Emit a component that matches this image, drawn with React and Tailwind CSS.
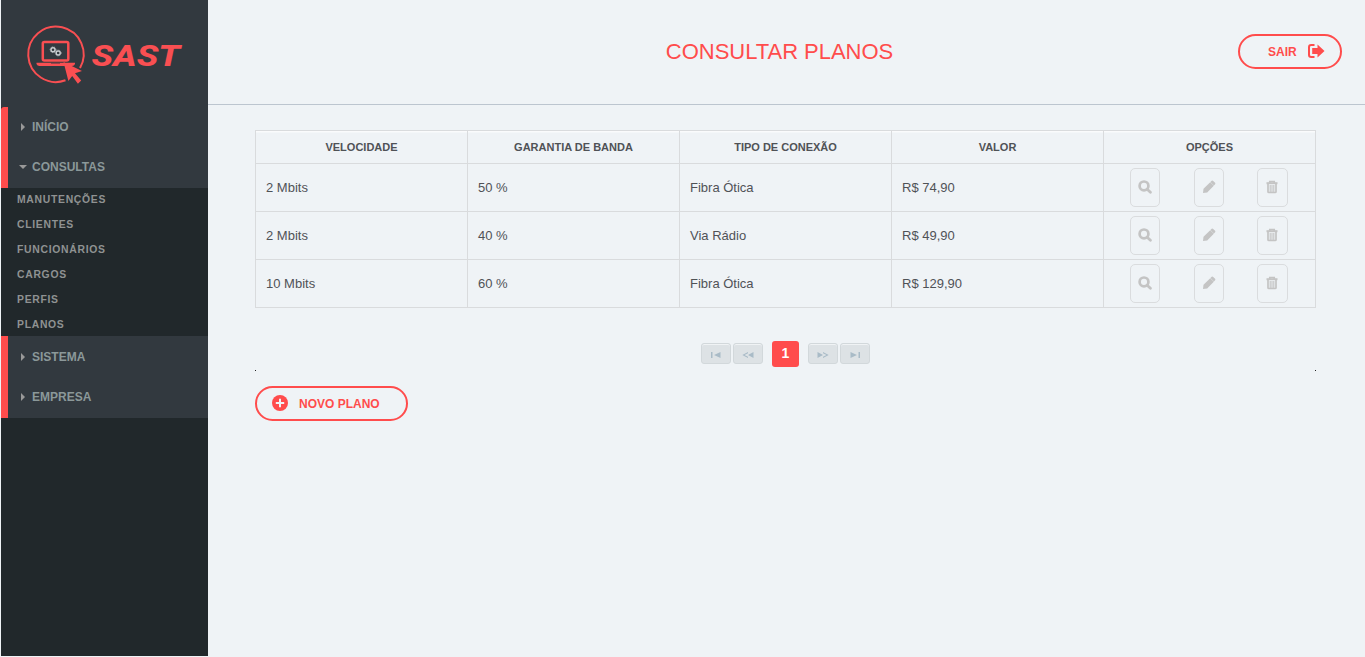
import React from "react";

const columns = ["VELOCIDADE", "GARANTIA DE BANDA", "TIPO DE CONEXÃO", "VALOR", "OPÇÕES"];
const plans = [
  ["2 Mbits", "50 %", "Fibra Ótica", "R$ 74,90"],
  ["2 Mbits", "40 %", "Via Rádio", "R$ 49,90"],
  ["10 Mbits", "60 %", "Fibra Ótica", "R$ 129,90"],
];
const queries = ["MANUTENÇÕES", "CLIENTES", "FUNCIONÁRIOS", "CARGOS", "PERFIS", "PLANOS"];

function Logo() {
  return (
    <svg width="207" height="107" viewBox="1 0 207 107" className="block">
      <g fill="none" stroke="#f94f52">
        <path d="M80 68A27.700 27.700 0 1 0 65.500 80.300" strokeWidth="2" />
        <rect x="42.800" y="42.100" width="25.500" height="18.500" rx="1.500" strokeWidth="2.500" />
      </g>
      <path d="M36.500 62.800h38.500v1.200q-.8 2-3 2H39.500q-2.200 0-3-2z" fill="#f94f52" />
      <path d="M51 62.800h9v1h-9z" fill="#32393f" opacity=".6" />
      <path d="M63.500 62l18.500 9-7 2.300 6.200 7.200-3.300 3.200-5.700-7.700-3.800 5z" fill="#f94f52" />
      <g fill="none" stroke="#c9ced1">
        <circle cx="53" cy="49.700" r="2" strokeWidth="1.400" />
        <circle cx="53" cy="49.700" r="2.900" strokeWidth=".8" strokeDasharray="1 1.100" />
        <circle cx="58.200" cy="53" r="2" strokeWidth="1.400" />
        <circle cx="58.200" cy="53" r="2.900" strokeWidth=".8" strokeDasharray="1 1.100" />
      </g>
      <text
        x="91.500"
        y="66"
        textLength="88.500"
        lengthAdjust="spacingAndGlyphs"
        fill="#f94f52"
        className="font-['Roboto','Liberation_Sans',sans-serif] text-[29px] font-extrabold italic"
      >
        SAST
      </text>
    </svg>
  );
}

function SearchIcon() {
  return (
    <svg width="14" height="14" viewBox="0 0 14 14">
      <circle cx="6" cy="5.900" r="4.400" fill="none" stroke="#c4c4c4" strokeWidth="2.700" />
      <path d="M9.200 9.200l3.200 3" stroke="#c4c4c4" strokeWidth="2.800" strokeLinecap="round" />
    </svg>
  );
}

function PencilIcon() {
  return (
    <svg width="14" height="14" viewBox="0 0 14 14" fill="#c4c4c4">
      <path d="M1 13l.5-4.300L8.200 2.200l3.600 3.600L5.200 12.500zM8.400 2l1.300-1.200q.8-.6 1.500.1l1.900 1.900q.6.700 0 1.400L11.900 5.500z" />
    </svg>
  );
}

function TrashIcon() {
  return (
    <svg width="12" height="14" viewBox="0 0 12 14" fill="none" stroke="#c4c4c4">
      <path d="M.5 3.200h11" strokeWidth="2" />
      <path d="M3.800 3V1.500h4.400V3" strokeWidth="1.700" />
      <path d="M2 4v7.700q0 .8.800.8h6.400q.8 0 .8-.8V4" strokeWidth="1.700" />
      <path d="M4.200 5v7M6 5v7M7.800 5v7" strokeWidth="1.100" />
    </svg>
  );
}

function MenuItem({ label, open, className = "" }) {
  return (
    <a className={`flex h-10 items-center text-[12px] font-bold text-[#8b9899] ${className}`}>
      <span className="flex w-[23px] shrink-0 justify-end pr-[5px]">
        {open ? (
          <svg width="8" height="4" viewBox="0 0 8 4"><path d="M0 0h8L4 4z" fill="#999" /></svg>
        ) : (
          <svg width="4" height="8" viewBox="0 0 4 8" className="mr-[2px]"><path d="M0 0l4 4-4 4z" fill="#999" /></svg>
        )}
      </span>
      {label}
    </a>
  );
}

function OptionButton({ children, className = "" }) {
  return (
    <button className={`flex h-[39px] items-center justify-center rounded-[5px] border border-[#dadcde] pb-px ${className}`}>
      {children}
    </button>
  );
}

function PageButton({ d, className = "" }) {
  return (
    <button className={`flex h-[21px] w-[30px] items-center justify-center rounded-[3px] border border-[#d2d8db] bg-[#dde2e5] shadow-[inset_0_1px_0_#f0f3f5] ${className}`}>
      <svg width="12" height="6" viewBox="0 0 12 6" className="mt-[2px]" fill="#a9bbc7"><path d={d} /></svg>
    </button>
  );
}

export default function App() {
  return (
    <div className="flex h-[657px] w-full overflow-hidden bg-[#eff3f6] pl-px font-['Liberation_Sans',Arial,sans-serif]">
      <aside className="h-[656px] w-[207px] shrink-0 bg-[#21282b]">
        <div className="h-[107px] bg-[#32393f]"><Logo /></div>
        <nav>
          <div className="h-[81px] rounded-tl-[3px] border-l-[7px] border-[#ff4c4c] bg-[#32393f]">
            <MenuItem label="INÍCIO" className="pl-px" />
            <MenuItem label="CONSULTAS" open className="pl-px" />
          </div>
          <div className="flex h-[148px] flex-col pl-4 text-[10.4px] font-bold tracking-[0.7px] text-[#8f9292]">
            {queries.map((item) => (
              <a key={item} className="flex h-[25px] shrink-0 items-center pb-px">{item}</a>
            ))}
          </div>
          <div className="h-[82px] border-l-[7px] border-[#ff4c4c] bg-[#32393f] pt-px">
            <MenuItem label="SISTEMA" className="pl-px" />
            <MenuItem label="EMPRESA" className="pl-px" />
          </div>
        </nav>
      </aside>

      <main className="min-w-0 flex-1">
        <header className="grid h-[105px] grid-cols-[1fr_auto_1fr] items-center border-b border-[#bcc5cf] pr-[23px]">
          <h1 className="col-start-2 ml-[9px] pb-px text-[22px] leading-[30px] tracking-[-0.03px] text-[#ff4c4c]">CONSULTAR PLANOS</h1>
          <button className="mb-0.5 flex h-[35px] w-[104px] items-center justify-self-end rounded-full border-2 border-[#ff4c4c] pl-7 text-[12px] font-bold text-[#ff4c4c]">
            <span className="w-7 pt-px">SAIR</span>
            <svg width="17" height="14" viewBox="0 0 17 14" className="ml-[12px]">
              <path d="M6.500 1H3.200Q1 1 1 3.200v7.600Q1 13 3.200 13h3.300" fill="none" stroke="#ff4c4c" strokeWidth="2" />
              <path d="M4.200 4H9.500V.5L16.500 7l-7 6.500V10H4.200z" fill="#ff4c4c" />
            </svg>
          </button>
        </header>

        <section className="ml-[47px] mt-[25px] w-[1061px]">
          <table className="w-full table-fixed border-collapse text-[13px] text-[#4f5256]">
            <thead>
              <tr className="h-[33px]">
                {columns.map((label) => (
                  <th key={label} className="border border-[#d9dbdd] p-0 text-[11px] font-bold shadow-[inset_0_1.5px_0_#fafbfc]">{label}</th>
                ))}
              </tr>
            </thead>
            <tbody>
              {plans.map((plan, row) => (
                <tr key={row} className="h-12">
                  {plan.map((value) => (
                    <td key={value} className="border border-[#d9dbdd] p-0 pl-[10px]">{value}</td>
                  ))}
                  <td className="border border-[#d9dbdd] p-0">
                    <div className="flex justify-center pr-[2px]">
                      <OptionButton className="w-[30px]"><SearchIcon /></OptionButton>
                      <OptionButton className="ml-[34px] w-[30px]"><PencilIcon /></OptionButton>
                      <OptionButton className="ml-[33px] w-[31px]"><TrashIcon /></OptionButton>
                    </div>
                  </td>
                </tr>
              ))}
            </tbody>
          </table>

          <div className="mt-[33px] flex h-[26px] items-start justify-center">
            <PageButton d="M1 0h1.500v6H1zM10.500 0v6L4 3z" className="mt-0.5" />
            <PageButton d="M6 0v1.200L2.500 3 6 4.800V6L.3 3zM11.500 0v6L6 3z" className="ml-0.5 mt-0.5" />
            <span className="mx-[9px] flex h-[26px] w-[27px] items-center justify-center rounded-[3px] bg-[#ff4c4c] pb-px text-[14px] font-bold text-white">1</span>
            <PageButton d="M.5 0v6L6 3zM6 0v1.200L9.500 3 6 4.800V6l5.700-3z" className="mt-0.5" />
            <PageButton d="M1.500 0v6L8 3zM9.500 0H11v6H9.500z" className="ml-0.5 mt-0.5" />
          </div>
          <div className="mt-[3px] flex h-px justify-between">
            <span className="h-px w-px bg-[#222]" />
            <span className="h-px w-px bg-[#222]" />
          </div>
          <button className="mt-[15px] flex h-[35px] w-[153px] items-center rounded-full border-2 border-[#ff4c4c] pl-[15px] text-[12px] font-bold text-[#ff4c4c]">
            <svg width="16" height="16" viewBox="0 0 16 16" className="mb-0.5 mr-[11px]">
              <circle cx="8" cy="8" r="8" fill="#ff4c4c" />
              <path d="M8 3.800v8.400M3.800 8h8.400" stroke="#eff3f6" strokeWidth="2" />
            </svg>
            NOVO PLANO
          </button>
        </section>
      </main>
    </div>
  );
}
